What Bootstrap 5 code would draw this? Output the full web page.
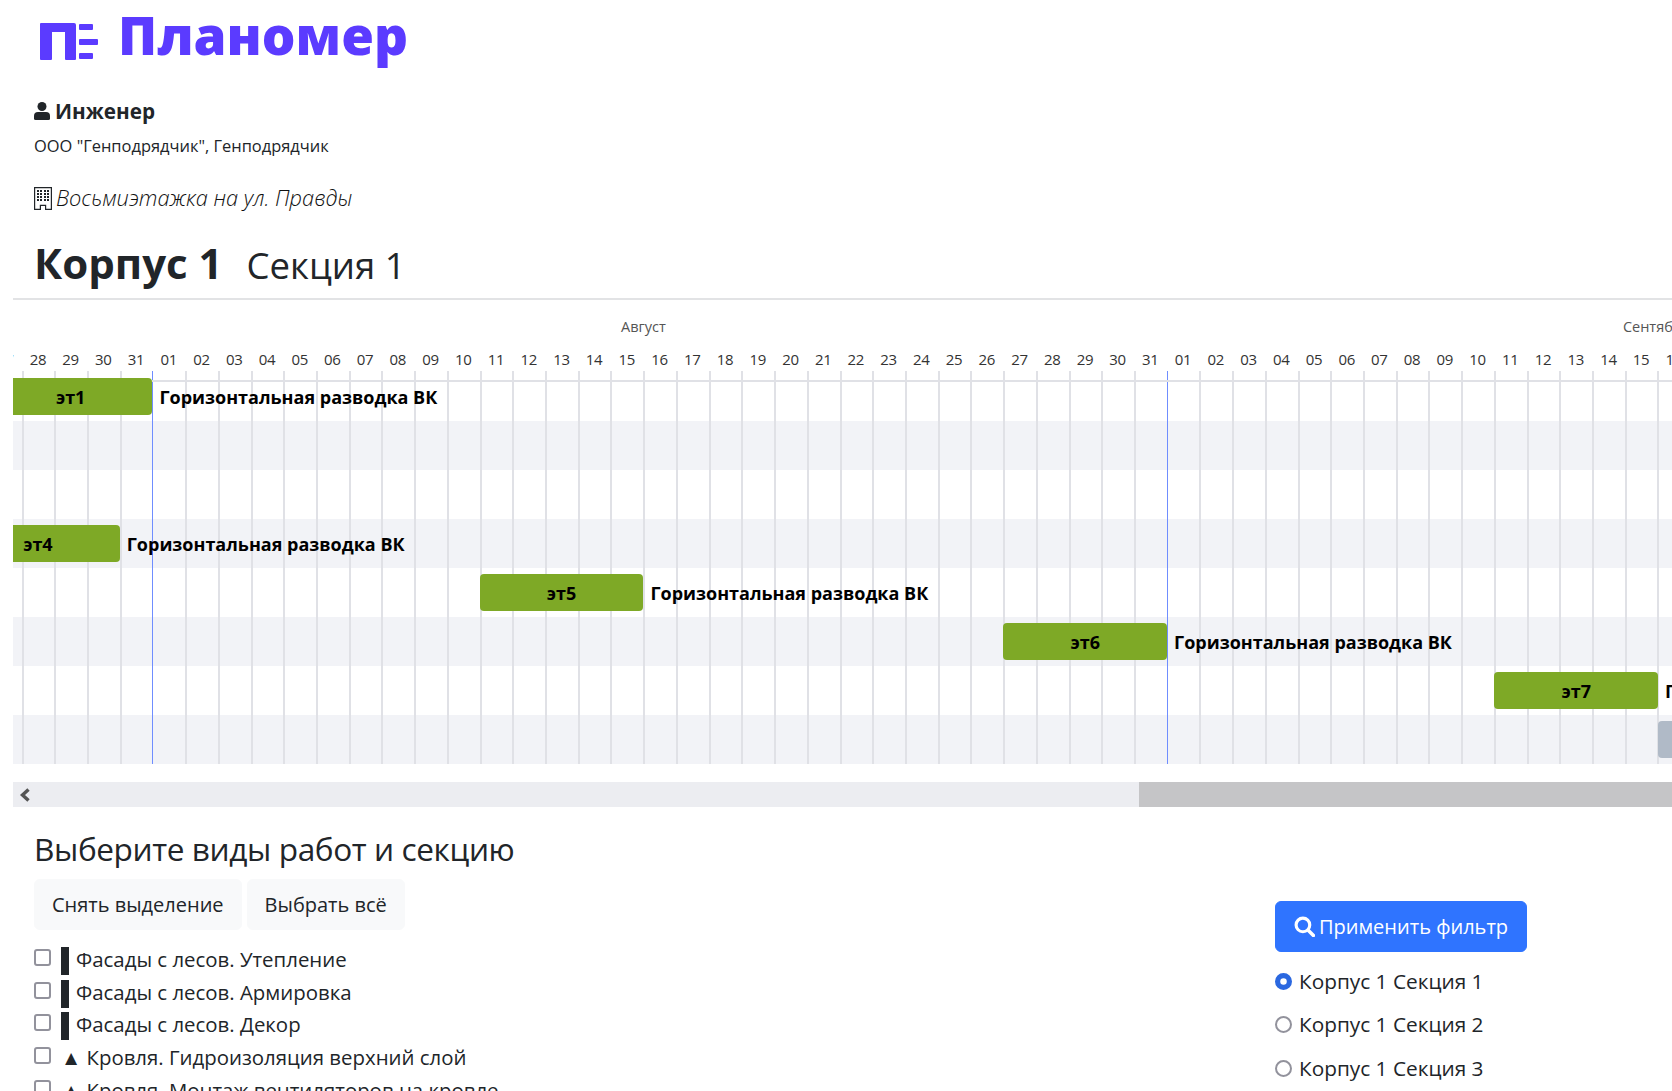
<!doctype html>
<html lang="ru">

<head>
  <meta charset="utf-8">
  <meta name="viewport" content="width=device-width, initial-scale=1">
  <title>Планомер</title>
  <link href="https://cdn.jsdelivr.net/npm/bootstrap@5.3.0/dist/css/bootstrap.min.css" rel="stylesheet">
  <style>
    body {
      font-family: "Open Sans", "Noto Sans", sans-serif;
      color: #212529;
      overflow-x: hidden;
      --day: 32.73px;
    }

    .page-top { padding-left: 34px; }

    .logo-line { height: 76px; padding-left: 6px; }
    .logo-mark { width: 58px; height: 40px; margin-top: 21px; }
    .logo-word {
      color: #5b3bff;
      font-size: 53px;
      font-weight: 800;
      line-height: 1;
      margin: 8px 0 0 20px;
    }

    .user-name { font-size: 20.7px; font-weight: 700; margin-top: 20px; line-height: 30px; gap: 5px; }
    .user-org { font-size: 16.45px; margin-top: 8px; line-height: 24px; }
    .site-name { font-size: 21.8px; font-style: italic; font-weight: 300; margin-top: 24px; line-height: 32px; color: #111; }
    .build-title { margin-top: 22px; height: 62px; }
    .build-title b { font-size: 42px; font-weight: 700; line-height: 54px; }
    .build-title span { font-size: 36.5px; margin-left: 24px; line-height: 54px; }

    .page-rule { margin: 0 0 0 13px; border-top: 2px solid #e2e3e5; }

    .gantt-view { margin-left: 13px; overflow: hidden; position: relative; height: 465px; }
    .gantt-canvas { margin-left: -56.9px; width: 2400px; position: relative; }

    .month-row { height: 48px; padding-top: 16px; font-size: 14.5px; color: #555; line-height: 22px; }
    .month-row > div { flex: none; }
    .day-row { height: 24px; font-size: 15px; color: #333; line-height: 22px; letter-spacing: -0.3px; }
    .day-cell { flex: 0 0 var(--day); text-align: center; }

    .grid-layer { position: absolute; top: 71px; bottom: 0; left: 0; z-index: 1; }
    .grid-line { flex: 0 0 var(--day); border-left: 2px solid #e0e1e6; }
    .grid-line.month-start { border-left-color: #6f8dff; border-left-width: 1px; }

    .head-line { position: absolute; left: 0; right: 0; top: 80px; border-top: 2px solid #e0e1e6; z-index: 1; }

    .gantt-row { height: 49px; position: relative; }
    .gantt-row.striped { background: #f2f3f7; }

    .gantt-task { position: absolute; top: 6px; white-space: nowrap; z-index: 2; }
    .task-bar {
      height: 37px;
      border-radius: 4px;
      background: #7ea926;
      color: #000;
      font-size: 18px;
      font-weight: 700;
      line-height: 38px;
      text-align: center;
    }
    .task-bar.future { background: #b0bac7; }
    .task-name { color: #000; font-size: 18px; font-weight: 700; line-height: 38px; margin-left: 7px; }

    .gantt-scroll { height: 25px; margin: 17px 0 0 13px; background: #ecedf1; }
    .scroll-arrow { width: 24px; }
    .scroll-thumb { width: 533px; background: #c5c5c7; }

    .filter-main { padding-left: 34px; }
    .filter-title { font-size: 31.6px; font-weight: 400; line-height: 44px; margin: 20px 0 8px; letter-spacing: -0.4px; }
    .filter-btn.btn { font-size: 20px; height: 51px; padding: 0 17px; line-height: 50px; background: #f8f9fa; border-color: #f8f9fa; color: #212529; }
    .filter-btns { gap: 5px; }

    .work-list { margin-top: 13px; }
    .work-item { height: 32.7px; font-size: 20.4px; line-height: 32px; }
    .work-item .form-check-input { width: 17px; height: 17px; margin: 6px 10px 0 0; border-radius: 3px; border: 2px solid #92929c; }
    .work-mark { display: inline-block; width: 8px; height: 28px; background: #212529; vertical-align: -8px; margin-right: 7px; }

    .filter-side { width: 397px; padding-top: 94px; }
    .apply-btn.btn { font-size: 20px; height: 51px; width: 252px; padding: 0; background: #2f74ff; border-color: #2f74ff; }
    .section-item { height: 43.4px; font-size: 20.8px; line-height: 32px; }
    .section-item .form-check-input { width: 17px; height: 17px; margin: 8px 7px 0 0; border: 2px solid #92929c; }
    .section-item .form-check-input:checked { background-color: #2b68e0; border-color: #2b68e0; }
    .section-list { margin-top: 13px; }
  </style>
</head>

<body>

  <div class="page-top">
    <!-- Logo -->
    <div class="logo-line d-flex">
      <svg class="logo-mark" viewBox="0 0 58 40" fill="#5b3bff">
        <path d="M1 2h33a2 2 0 0 1 2 2v34a1 1 0 0 1-1 1H26a1 1 0 0 1-1-1V11H12v27a1 1 0 0 1-1 1H1a1 1 0 0 1-1-1V3a1 1 0 0 1 1-1z" />
        <rect x="39" y="3" width="14" height="6" rx="1" />
        <rect x="39" y="18" width="19" height="6" rx="1" />
        <rect x="39" y="32" width="14" height="6" rx="1" />
      </svg>
      <div class="logo-word">Планомер</div>
    </div>

    <div class="user-name d-flex align-items-center">
      <svg width="16" height="18" viewBox="0 0 16 18" fill="#212529">
        <circle cx="8" cy="4.5" r="4.5" />
        <path d="M4 10h8a4 4 0 0 1 4 4v2.5a1.5 1.5 0 0 1-1.5 1.5h-13A1.5 1.5 0 0 1 0 16.500V14a4 4 0 0 1 4-4z" />
      </svg>
      <span>Инженер</span>
    </div>
    <div class="user-org">ООО "Генподрядчик", Генподрядчик</div>

    <div class="site-name d-flex align-items-center gap-1">
      <svg width="18" height="23" viewBox="0 0 18 23" fill="#212529">
        <path d="M0 0h18v23H11v-4H7v4H0zM1.200 1.200v20.600h4.600v-4h6.400v4h4.600V1.200z" />
        <g>
          <rect x="3" y="3" width="2" height="2" /><rect x="6" y="3" width="2" height="2" /><rect x="10" y="3" width="2" height="2" /><rect x="13" y="3" width="2" height="2" />
          <rect x="3" y="6" width="2" height="2" /><rect x="6" y="6" width="2" height="2" /><rect x="10" y="6" width="2" height="2" /><rect x="13" y="6" width="2" height="2" />
          <rect x="3" y="9" width="2" height="2" /><rect x="6" y="9" width="2" height="2" /><rect x="10" y="9" width="2" height="2" /><rect x="13" y="9" width="2" height="2" />
          <rect x="3" y="12" width="2" height="2" /><rect x="6" y="12" width="2" height="2" /><rect x="10" y="12" width="2" height="2" /><rect x="13" y="12" width="2" height="2" />
        </g>
      </svg>
      <span>Восьмиэтажка на ул. Правды</span>
    </div>

    <div class="build-title"><b>Корпус 1</b><span>Секция 1</span></div>
  </div>
  <div class="page-rule"></div>

  <!-- Gantt -->
  <div class="gantt-view">
    <div class="gantt-canvas" id="ganttCanvas">
      <div class="month-row d-flex">
        <div style="width: 196.4px"></div>
        <div class="text-center" style="width: 1014.6px; padding-right: 32.7px">Август</div>
        <div class="text-center" style="width: 979px">Сентябрь</div>
      </div>
      <div class="day-row d-flex" id="dayRow"></div>
      <div class="grid-layer d-flex" id="gridLayer"></div>
      <div class="head-line"></div>
      <div id="ganttRows"></div>
    </div>
  </div>

  <div class="gantt-scroll d-flex">
    <div class="scroll-arrow d-flex align-items-center justify-content-center">
      <svg width="12" height="14" viewBox="0 0 12 14"><path d="M9.500 1.500 3.500 7l6 5.500" fill="none" stroke="#555" stroke-width="3.400" /></svg>
    </div>
    <div class="flex-grow-1"></div>
    <div class="scroll-thumb"></div>
  </div>

  <!-- Filter -->
  <div class="d-flex">
    <div class="filter-main flex-grow-1">
      <h2 class="filter-title">Выберите виды работ и секцию</h2>
      <div class="d-flex filter-btns">
        <button type="button" class="btn filter-btn">Снять выделение</button>
        <button type="button" class="btn filter-btn">Выбрать всё</button>
      </div>
      <div class="work-list">
        <div class="work-item d-flex"><input class="form-check-input" type="checkbox"><span><i class="work-mark"></i>Фасады с лесов. Утепление</span></div>
        <div class="work-item d-flex"><input class="form-check-input" type="checkbox"><span><i class="work-mark"></i>Фасады с лесов. Армировка</span></div>
        <div class="work-item d-flex"><input class="form-check-input" type="checkbox"><span><i class="work-mark"></i>Фасады с лесов. Декор</span></div>
        <div class="work-item d-flex"><input class="form-check-input" type="checkbox"><span>▲ Кровля. Гидроизоляция верхний слой</span></div>
        <div class="work-item d-flex"><input class="form-check-input" type="checkbox"><span>▲ Кровля. Монтаж вентиляторов на кровле</span></div>
      </div>
    </div>
    <div class="filter-side">
      <button type="button" class="btn btn-primary apply-btn d-inline-flex align-items-center justify-content-center gap-1">
        <svg width="21" height="21" viewBox="0 0 20 20"><circle cx="8.500" cy="8.500" r="6.500" fill="none" stroke="#fff" stroke-width="3" /><path d="m13.500 13.500 5 5" stroke="#fff" stroke-width="3.400" stroke-linecap="round" /></svg>
        Применить фильтр
      </button>
      <div class="section-list">
        <div class="section-item d-flex"><input class="form-check-input" type="radio" name="section" checked><span>Корпус 1 Секция 1</span></div>
        <div class="section-item d-flex"><input class="form-check-input" type="radio" name="section"><span>Корпус 1 Секция 2</span></div>
        <div class="section-item d-flex"><input class="form-check-input" type="radio" name="section"><span>Корпус 1 Секция 3</span></div>
      </div>
    </div>
  </div>

  <script>
    const dayWidth = 32.73;
    const pad = (n) => String(n).padStart(2, '0');

    // Jul 26 .. Sep 17, the range visible in the window
    const days = [];
    for (let d = 26; d <= 31; d++) days.push(d);
    for (let d = 1; d <= 31; d++) days.push(d);
    for (let d = 1; d <= 17; d++) days.push(d);

    document.getElementById('dayRow').innerHTML = days
      .map((d) => `<div class="day-cell">${pad(d)}</div>`).join('');
    document.getElementById('gridLayer').innerHTML = days
      .map((d) => `<div class="grid-line ${d === 1 ? 'month-start' : ''}"></div>`).join('');

    // start = index in days[], key = gantt row
    const tasks = {
      0: { start: 1, label: 'эт1' },
      3: { start: 0, label: 'эт4' },
      4: { start: 16, label: 'эт5' },
      5: { start: 32, label: 'эт6' },
      6: { start: 47, label: 'эт7' },
      7: { start: 52, label: 'эт8', future: true }
    };

    let rows = '';
    for (let i = 0; i < 8; i++) {
      const t = tasks[i];
      let inner = '';
      if (t) {
        inner = `<div class="gantt-task d-flex" style="left: ${t.start * dayWidth}px">
          <div class="task-bar ${t.future ? 'future' : ''}" style="width: ${5 * dayWidth}px">${t.label}</div>
          <div class="task-name">Горизонтальная разводка ВК</div>
        </div>`;
      }
      rows += `<div class="gantt-row ${i % 2 ? 'striped' : ''}">${inner}</div>`;
    }
    document.getElementById('ganttRows').innerHTML = rows;
  </script>
  <script src="https://cdn.jsdelivr.net/npm/bootstrap@5.3.0/dist/js/bootstrap.bundle.min.js"></script>
</body>

</html>
